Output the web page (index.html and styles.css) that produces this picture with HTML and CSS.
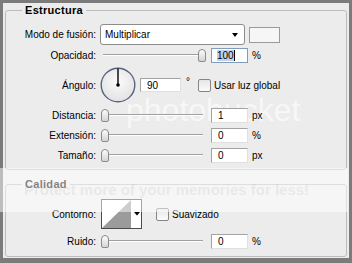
FILE: index.html
```html
<!DOCTYPE html>
<html lang="es">
<head>
    <meta charset="UTF-8">
    <title>Sombra paralela</title>
    <link rel="stylesheet" href="styles.css">
</head>
<body>
    <div class="dialog">
        <!-- watermark left on the original screenshot, sits under the controls -->
        <div class="photo-mark">photobucket</div>

        <fieldset class="group">
            <legend>Estructura</legend>

            <div class="row row-select">
                <label class="lbl">Modo de fusión:</label>
                <div class="select"><span>Multiplicar</span><span class="arrow"></span></div>
                <div class="swatch"></div>
            </div>

            <div class="row">
                <label class="lbl">Opacidad:</label>
                <div class="slider full"><div class="track"></div><div class="thumb"></div></div>
                <div class="field focus"><span class="sel">100</span><span class="caret"></span></div>
                <span class="unit">%</span>
            </div>

            <div class="row row-angle">
                <label class="lbl">Ángulo:</label>
                <svg class="dial" width="36" height="36" viewBox="0 0 36 36">
                    <defs>
                        <radialGradient id="dialFill" cx="50%" cy="40%" r="60%">
                            <stop offset="0" stop-color="#fbfbfb"/>
                            <stop offset="1" stop-color="#e2e2e2"/>
                        </radialGradient>
                    </defs>
                    <circle cx="18" cy="18" r="16.8" fill="url(#dialFill)" stroke="#56627f" stroke-width="1.4"/>
                    <line x1="18" y1="18" x2="18" y2="1.5" stroke="#000" stroke-width="1.4"/>
                    <circle cx="18" cy="18" r="1.8" fill="#000"/>
                </svg>
                <div class="field wide">90</div>
                <span class="deg">°</span>
                <span class="check"></span>
                <span class="check-text">Usar luz global</span>
            </div>

            <div class="row">
                <label class="lbl">Distancia:</label>
                <div class="slider"><div class="track"></div><div class="thumb"></div></div>
                <div class="field">1</div>
                <span class="unit">px</span>
            </div>

            <div class="row">
                <label class="lbl">Extensión:</label>
                <div class="slider"><div class="track"></div><div class="thumb"></div></div>
                <div class="field">0</div>
                <span class="unit">%</span>
            </div>

            <div class="row">
                <label class="lbl">Tamaño:</label>
                <div class="slider"><div class="track"></div><div class="thumb"></div></div>
                <div class="field">0</div>
                <span class="unit">px</span>
            </div>
        </fieldset>

        <fieldset class="group">
            <legend>Calidad</legend>

            <div class="row row-contour">
                <label class="lbl">Contorno:</label>
                <svg class="contour" width="41" height="30" viewBox="0 0 41 30">
                    <rect x="0.5" y="0.5" width="40" height="29" fill="#fff" stroke="#4a4a4a"/>
                    <polygon points="1,29 30,1 30,29" fill="#9b9b9b"/>
                    <polygon points="33,13 39,13 36,16.5" fill="#000"/>
                </svg>
                <span class="check check-aa"></span>
                <span class="check-text">Suavizado</span>
            </div>

            <div class="row row-noise">
                <label class="lbl">Ruido:</label>
                <div class="slider"><div class="track"></div><div class="thumb"></div></div>
                <div class="field">0</div>
                <span class="unit">%</span>
            </div>
        </fieldset>
    </div>

    <div class="band">Protect more of your memories for less!</div>
</body>
</html>
```

FILE: styles.css
```css
* {
    margin: 0;
    padding: 0;
    box-sizing: border-box;
}

html,
body {
    background: #7b7b7b;
}

body {
    font-family: "Liberation Sans", Arial, sans-serif;
    font-size: 10px;
    color: #000;
    height: 263px;
    overflow: hidden;
    position: relative;
}

.dialog {
    margin: 3px 3px 0 3px;
    background: #ececec;
    padding-bottom: 1px;
    position: relative;
}

.group {
    position: relative;
    z-index: 1;
    border: 1px solid #bcbcbc;
    border-radius: 3px;
    margin: 0 2px;
    padding: 7px 0 4px 0;
}

.group + .group {
    margin-top: 7px;
}

legend {
    margin-left: 16px;
    padding: 0 3px;
    font-size: 11px;
    font-weight: bold;
    line-height: 14px;
    letter-spacing: 0.3px;
}

.row {
    display: flex;
    align-items: center;
    height: 20px;
}

.row-select {
    height: 21px;
}

.row-angle {
    height: 40px;
}

.row-contour {
    height: 32px;
}

.row-noise {
    height: 22px;
}

.lbl {
    width: 90px;
    flex: none;
    text-align: right;
}

.select {
    margin-left: 4px;
    width: 145px;
    height: 21px;
    border: 1px solid #8c8c8c;
    border-radius: 3px;
    background: #fff;
    display: flex;
    align-items: center;
    justify-content: space-between;
    padding: 0 6px 0 4px;
}

.arrow {
    width: 0;
    height: 0;
    border-left: 3.5px solid transparent;
    border-right: 3.5px solid transparent;
    border-top: 4px solid #000;
}

.swatch {
    margin-left: 4px;
    width: 31px;
    height: 16px;
    border: 1px solid #9a9a9a;
    background: #f6f6f6;
}

.slider {
    margin-left: 4px;
    width: 106px;
    height: 14px;
    display: grid;
}

.slider > * {
    grid-area: 1 / 1;
}

.track {
    align-self: center;
    height: 2px;
    margin: 0 3px;
    border-top: 1px solid #a0a0a0;
    border-bottom: 1px solid #fff;
}

.thumb {
    justify-self: start;
    margin-left: 1px;
    width: 8px;
    height: 13px;
    align-self: center;
    border: 1px solid #8a8a8a;
    border-radius: 4px 4px 2px 2px;
    background: linear-gradient(#fdfdfd, #d4d4d4);
}

.slider.full .thumb {
    justify-self: end;
    margin-left: 0;
}

.field {
    margin-left: 5px;
    width: 37px;
    height: 15px;
    border: 1px solid;
    border-color: #a3a3a3 #e0e0e0 #e0e0e0 #a3a3a3;
    background: #fff;
    padding-left: 6px;
    line-height: 13px;
    display: flex;
    align-items: center;
}

.field.focus {
    border-color: #7f9db9;
    padding-left: 5px;
}

.field.wide {
    margin-left: 4px;
    width: 41px;
    height: 14px;
    padding-left: 6px;
}

.sel {
    background: #c4d1e9;
    line-height: 11px;
}

.caret {
    width: 1px;
    height: 11px;
    background: #000;
}

.unit {
    margin-left: 4px;
}

.deg {
    margin-left: 5px;
    align-self: flex-start;
    margin-top: 11px;
}

.check {
    margin-left: 8px;
    width: 13px;
    height: 13px;
    border: 1px solid #858585;
    border-radius: 2px;
    background: linear-gradient(#e6e6e6, #fbfbfb);
}

.check-aa {
    margin-left: 14px;
}

.check-text {
    margin-left: 3px;
}

.dial {
    margin-left: 4px;
    display: block;
}

.contour {
    margin-left: 5px;
    display: block;
}

.photo-mark {
    position: absolute;
    z-index: 0;
    left: 123px;
    top: 89px;
    font-size: 32px;
    color: rgba(255, 255, 255, 0.6);
}

.band {
    position: absolute;
    z-index: 2;
    left: 0;
    top: 168px;
    width: 348px;
    height: 44px;
    background: rgba(255, 255, 255, 0.5);
    padding-left: 24px;
    font-size: 15px;
    font-weight: bold;
    line-height: 44px;
    color: rgba(160, 160, 160, 0.16);
    white-space: nowrap;
}
```
